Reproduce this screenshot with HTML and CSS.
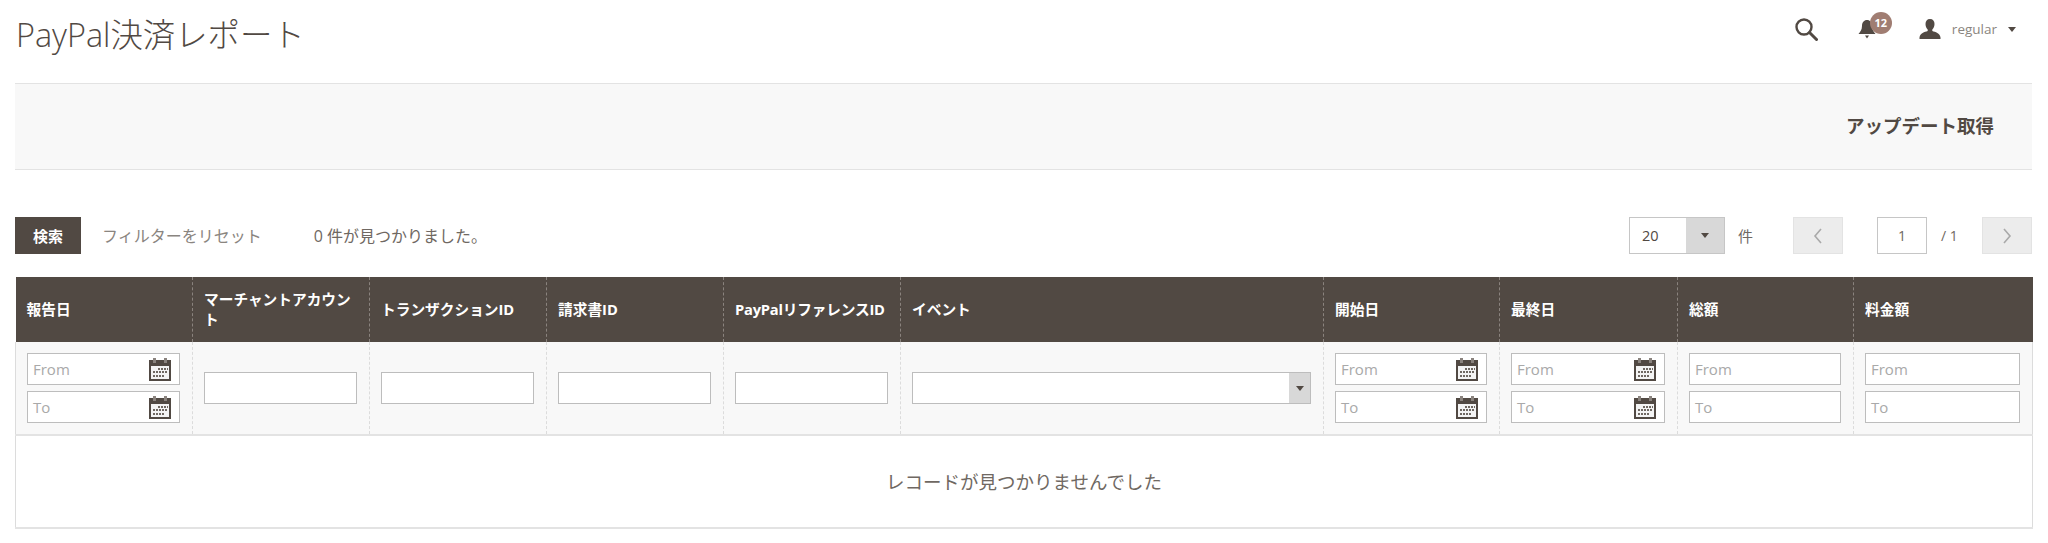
FILE: index.html
```html
<!DOCTYPE html>
<html lang="ja">
<head>
  <meta charset="UTF-8">
  <title>PayPal決済レポート</title>
  <link rel="stylesheet" href="styles.css">
</head>
<body>
  <svg class="defs" width="0" height="0">
    <symbol id="cal" viewBox="0 0 24 24">
      <path d="M1 3h22v21H1z" fill="#514943"/>
      <path d="M3 9h18v13H3z" fill="#f4f4f4"/>
      <path d="M5 1h3v5H5zM16 1h3v5h-3z" fill="#8a837e"/>
      <path d="M10 11h2v2h-2zM13 11h2v2h-2zM16 11h2v2h-2zM19 11h1v2h-1zM5 14h2v2H5zM8 14h2v2H8zM11 14h2v2h-2zM14 14h2v2h-2zM17 14h2v2h-2zM5 18h2v2H5zM8 18h2v2H8zM11 18h2v2h-2zM14 18h2v2h-2z" fill="#6f6862"/>
    </symbol>
  </svg>

  <header class="page-header">
    <h1>PayPal決済レポート</h1>
    <div class="header-actions">
      <svg class="icon-search" viewBox="0 0 24 24"><circle cx="10" cy="10" r="7.5" fill="none" stroke="#514943" stroke-width="2.4"/><path d="M15.5 15.5l7 7" stroke="#514943" stroke-width="3" stroke-linecap="round"/></svg>
      <div class="bell">
        <svg class="icon-bell" viewBox="0 0 18 20"><path d="M9 1c-3 0-5 2.500-5 6 0 4-2 6-3.500 8h17C16 13 14 11 14 7c0-3.500-2-6-5-6z" fill="#514943"/><path d="M7 16.500h4L9 19.500z" fill="#514943"/></svg>
        <span class="badge">12</span>
      </div>
      <div class="user">
        <svg class="icon-user" viewBox="0 0 22 20"><path d="M11 0c3 0 4.500 2 4.500 5 0 2.500-1 4.500-2.200 5.500v1.500c3 1 7.700 2 8.200 6.500V20H.5v-1.500c.5-4.500 5.200-5.500 8.200-6.500v-1.500C7.500 9.500 6.500 7.500 6.500 5 6.500 2 8 0 11 0z" fill="#514943"/></svg>
        <span class="user-name">regular</span>
        <span class="caret"></span>
      </div>
    </div>
  </header>

  <div class="action-bar">
    <span class="action-link">アップデート取得</span>
  </div>

  <div class="toolbar">
    <button class="btn-search">検索</button>
    <span class="reset">フィルターをリセット</span>
    <span class="found">0 件が見つかりました。</span>
    <div class="pager">
      <div class="per-page">
        <span class="per-value">20</span>
        <span class="per-toggle"><span class="caret"></span></span>
      </div>
      <span class="per-label">件</span>
      <span class="page-btn prev"><svg viewBox="0 0 10 18"><path d="M8 2L2 9l6 7" fill="none" stroke="#a9a9a9" stroke-width="1.600"/></svg></span>
      <span class="page-input">1</span>
      <span class="page-total">/ 1</span>
      <span class="page-btn next"><svg viewBox="0 0 10 18"><path d="M2 2l6 7-6 7" fill="none" stroke="#a9a9a9" stroke-width="1.600"/></svg></span>
    </div>
  </div>

  <table class="grid">
    <colgroup>
      <col class="c177"><col class="c177"><col class="c177"><col class="c177"><col class="c177">
      <col class="c423"><col class="c176"><col class="c178"><col class="c176"><col class="c179">
    </colgroup>
    <thead>
      <tr>
        <th>報告日</th>
        <th>マーチャントアカウント</th>
        <th>トランザクションID</th>
        <th>請求書ID</th>
        <th>PayPalリファレンスID</th>
        <th>イベント</th>
        <th>開始日</th>
        <th>最終日</th>
        <th>総額</th>
        <th>料金額</th>
      </tr>
    </thead>
    <tbody>
      <tr class="filters">
        <td>
          <div class="field date"><span>From</span><svg><use href="#cal"/></svg></div>
          <div class="field date"><span>To</span><svg><use href="#cal"/></svg></div>
        </td>
        <td><div class="field"></div></td>
        <td><div class="field"></div></td>
        <td><div class="field"></div></td>
        <td><div class="field"></div></td>
        <td><div class="field select"><span class="select-toggle"><span class="caret"></span></span></div></td>
        <td>
          <div class="field date"><span>From</span><svg><use href="#cal"/></svg></div>
          <div class="field date"><span>To</span><svg><use href="#cal"/></svg></div>
        </td>
        <td>
          <div class="field date"><span>From</span><svg><use href="#cal"/></svg></div>
          <div class="field date"><span>To</span><svg><use href="#cal"/></svg></div>
        </td>
        <td>
          <div class="field date"><span>From</span></div>
          <div class="field date"><span>To</span></div>
        </td>
        <td>
          <div class="field date"><span>From</span></div>
          <div class="field date"><span>To</span></div>
        </td>
      </tr>
      <tr>
        <td class="empty" colspan="10">レコードが見つかりませんでした</td>
      </tr>
    </tbody>
  </table>
</body>
</html>
```

FILE: styles.css
```css
body {
  margin: 0;
  padding: 0 16px 0 15px;
  background: #fff;
  color: #41362f;
  font-family: 'Open Sans', 'Noto Sans CJK JP', sans-serif;
  font-size: 14.5px;
  overflow: hidden;
}

.defs {
  position: absolute;
}

.page-header {
  height: 83px;
  display: flex;
  justify-content: space-between;
  align-items: flex-start;
}

h1 {
  margin: 12px 0 0 1px;
  font-size: 32.4px;
  line-height: 44px;
  font-weight: 300;
  color: #514943;
}

.header-actions {
  display: flex;
  align-items: center;
  height: 58px;
  padding-right: 16px;
}

.icon-search {
  width: 24px;
  height: 24px;
  margin-right: 40px;
}

.bell {
  position: relative;
  width: 18px;
  height: 20px;
  margin-right: 43px;
}

.icon-bell {
  width: 18px;
  height: 20px;
  display: block;
}

.badge {
  position: absolute;
  left: 12px;
  top: -7px;
  width: 22px;
  height: 22px;
  border-radius: 50%;
  background: #a07d72;
  color: #fff;
  font-size: 11px;
  font-weight: 700;
  line-height: 22px;
  text-align: center;
}

.user {
  display: flex;
  align-items: center;
}

.icon-user {
  width: 22px;
  height: 20px;
  margin-right: 11px;
}

.user-name {
  font-size: 13.5px;
  color: #8a8580;
  margin-right: 11px;
}

.caret {
  display: inline-block;
  width: 0;
  height: 0;
  border-left: 4.5px solid transparent;
  border-right: 4.5px solid transparent;
  border-top: 5px solid #514943;
}

.action-bar {
  height: 85px;
  box-sizing: content-box;
  background: #f8f8f8;
  border-top: 1px solid #e3e3e3;
  border-bottom: 1px solid #e3e3e3;
  display: flex;
  align-items: center;
  justify-content: flex-end;
  padding-right: 38px;
}

.action-link {
  padding-bottom: 4px;
  font-size: 18.5px;
  font-weight: 700;
  color: #514943;
}

.toolbar {
  margin-top: 47px;
  height: 37px;
  display: flex;
  align-items: center;
  margin-bottom: 23px;
}

.btn-search {
  width: 66px;
  height: 37px;
  padding: 0;
  border: 0;
  background: #514943;
  color: #fff;
  font-family: inherit;
  font-size: 15px;
  font-weight: 700;
}

.reset {
  margin-left: 21px;
  padding-bottom: 2px;
  font-size: 16px;
  color: #8a8580;
}

.found {
  margin-left: 52px;
  padding-bottom: 2px;
  color: #6f6862;
  font-size: 16px;
}

.pager {
  margin-left: auto;
  display: flex;
  align-items: center;
  color: #6f6862;
}

.per-page {
  width: 96px;
  height: 37px;
  box-sizing: border-box;
  border: 1px solid #c6c6c6;
  display: flex;
  align-items: center;
}

.per-value {
  flex: 1;
  padding-left: 12px;
  color: #514943;
}

.per-toggle {
  width: 38px;
  height: 100%;
  background: #d8d8d8;
  display: flex;
  align-items: center;
  justify-content: center;
}

.per-label {
  margin-left: 13px;
  margin-right: 40px;
  font-size: 15px;
}

.page-btn {
  width: 50px;
  height: 37px;
  background: #ececec;
  border: 1px solid #e3e3e3;
  box-sizing: border-box;
  display: flex;
  align-items: center;
  justify-content: center;
}

.page-btn svg {
  width: 10px;
  height: 18px;
}

.page-input {
  width: 50px;
  height: 37px;
  margin-left: 34px;
  box-sizing: border-box;
  border: 1px solid #c6c6c6;
  line-height: 35px;
  text-align: center;
  font-size: 14px;
}

.page-total {
  width: 55px;
  padding-left: 14px;
  box-sizing: border-box;
  font-size: 14px;
}

.grid {
  width: 2017px;
  table-layout: fixed;
  border-collapse: collapse;
}

.c177 { width: 177px; }
.c423 { width: 423px; }
.c176 { width: 176px; }
.c178 { width: 178px; }
.c179 { width: 179px; }

th {
  height: 65px;
  padding: 0 11px 2px;
  box-sizing: border-box;
  background: #514943;
  color: #fff;
  border-left: 1px dashed #8a837e;
  font-size: 14.7px;
  font-weight: 700;
  line-height: 20px;
  text-align: left;
}

th:first-child {
  border-left: 0;
}

th:nth-child(5) {
  letter-spacing: -0.2px;
  white-space: nowrap;
}

.filters td {
  height: 93px;
  padding: 0 12px 0 11px;
  box-sizing: border-box;
  background: #f8f8f8;
  border-left: 1px dashed #dcdcdc;
  border-bottom: 2px solid #e3e3e3;
  vertical-align: middle;
}

.filters td:first-child {
  border-left: 1px solid #dcdcdc;
}

.filters td:last-child {
  border-right: 1px solid #dcdcdc;
}

.field {
  height: 32px;
  box-sizing: border-box;
  background: #fff;
  border: 1px solid #bdbdbd;
  display: flex;
  align-items: center;
  justify-content: space-between;
  padding-left: 5px;
  color: #a9a9a9;
  font-size: 15px;
}

.field + .field {
  margin-top: 6px;
}

.field svg {
  width: 24px;
  height: 24px;
  margin-right: 7px;
}

.select {
  padding: 0;
  justify-content: flex-end;
}

.select-toggle {
  width: 21px;
  height: 100%;
  background: #d8d8d8;
  display: flex;
  align-items: center;
  justify-content: center;
}

.select-toggle .caret {
  border-left-width: 4px;
  border-right-width: 4px;
}

.empty {
  height: 93px;
  box-sizing: border-box;
  padding-bottom: 2px;
  text-align: center;
  color: #6f6862;
  font-size: 18.5px;
  border: 1px solid #dcdcdc;
  border-top: 0;
  border-bottom: 2px solid #e3e3e3;
}
```
